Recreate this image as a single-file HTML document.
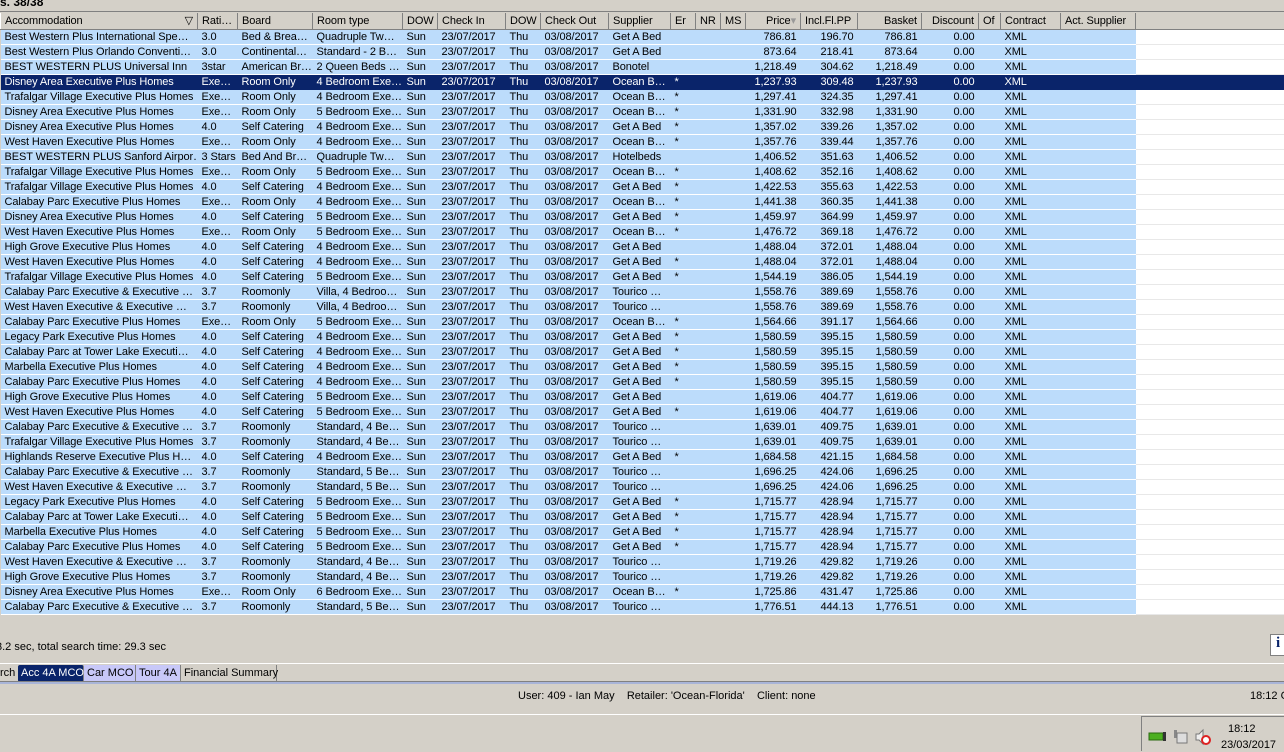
<!DOCTYPE html>
<html><head><meta charset="utf-8"><style>
*{margin:0;padding:0;box-sizing:border-box}
body{width:1284px;height:751px;overflow:hidden;background:#d4d0c8;font-family:"Liberation Sans",Tahoma,sans-serif;font-size:11px;color:#000;position:relative;white-space:nowrap}
#top{position:absolute;left:0;top:0;width:1284px;height:12px;border-bottom:1px solid #808080}
#top b{position:absolute;left:0;top:-5px;font-size:12px}
table{position:absolute;left:0;top:13px;border-collapse:collapse;table-layout:fixed;width:1284px;letter-spacing:-0.1px}
td,th{height:15px;line-height:14px;padding:0 4px;white-space:nowrap;overflow:hidden;font-weight:normal;text-align:left}
th{background:#d4d0c8;border-right:1px solid #808080;border-left:1px solid #fff;border-bottom:1px solid #808080;height:16px}
td{background:#bcdcfb;border-bottom:1px solid #fff}
td.w{background:#fff;border-bottom:1px solid #e8e8e8}
td.r{text-align:right}
tr.s td{background:#0a246a;color:#fff;border-bottom:1px solid #0a246a}
#msg{position:absolute;left:-4px;top:641px}
#tabs{position:absolute;left:0;top:663px;height:18px;width:1284px;border-top:1px solid #fff}
#tabs span{position:absolute;top:1px;height:17px;line-height:16px;padding:0 3px;border-right:1px solid #808080;white-space:nowrap}
#line1{position:absolute;left:0;top:681px;width:1284px;height:3px;background:#a8b4d8;border-top:1px solid #808080}
#status{position:absolute;top:690px;left:518px}
#clk{position:absolute;top:690px;left:1250px}
#line2{position:absolute;left:0;top:714px;width:1284px;height:1px;background:#fff}
#tray{position:absolute;left:1141px;top:716px;width:143px;height:35px;border-left:1px solid #808080;border-top:1px solid #808080}
#ib{position:absolute;left:1270px;top:634px;width:16px;height:22px;background:#fff;border:1px solid #808080;font:bold 15px "Liberation Serif",serif;color:#0a246a;padding-left:5px}
</style></head><body>
<div id="top"><b>s. 38/38</b></div>
<table>
<colgroup><col style="width:197px"><col style="width:40px"><col style="width:75px"><col style="width:90px"><col style="width:35px"><col style="width:68px"><col style="width:35px"><col style="width:68px"><col style="width:62px"><col style="width:25px"><col style="width:25px"><col style="width:25px"><col style="width:55px"><col style="width:57px"><col style="width:64px"><col style="width:57px"><col style="width:22px"><col style="width:60px"><col style="width:75px"><col style="width:149px"></colgroup>
<tr><th>Accommodation<span style="float:right">&#9661;</span></th><th>Rati…</th><th>Board</th><th>Room type</th><th>DOW</th><th>Check In</th><th>DOW</th><th>Check Out</th><th>Supplier</th><th>Er</th><th>NR</th><th>MS</th><th style="text-align:right">Price<span style="color:#999">&#9662;</span></th><th>Incl.Fl.PP</th><th style="text-align:right">Basket</th><th style="text-align:right">Discount</th><th>Of</th><th>Contract</th><th>Act. Supplier</th><th></th></tr>
<tr><td>Best Western Plus International Spe…</td><td>3.0</td><td>Bed &amp; Brea…</td><td>Quadruple Tw…</td><td>Sun</td><td>23/07/2017</td><td>Thu</td><td>03/08/2017</td><td>Get A Bed</td><td></td><td></td><td></td><td class="r">786.81</td><td class="r">196.70</td><td class="r">786.81</td><td class="r">0.00</td><td></td><td>XML</td><td></td><td class="w"></td></tr>
<tr><td>Best Western Plus Orlando Conventi…</td><td>3.0</td><td>Continental…</td><td>Standard - 2 B…</td><td>Sun</td><td>23/07/2017</td><td>Thu</td><td>03/08/2017</td><td>Get A Bed</td><td></td><td></td><td></td><td class="r">873.64</td><td class="r">218.41</td><td class="r">873.64</td><td class="r">0.00</td><td></td><td>XML</td><td></td><td class="w"></td></tr>
<tr><td>BEST WESTERN PLUS Universal Inn</td><td>3star</td><td>American Br…</td><td>2 Queen Beds …</td><td>Sun</td><td>23/07/2017</td><td>Thu</td><td>03/08/2017</td><td>Bonotel</td><td></td><td></td><td></td><td class="r">1,218.49</td><td class="r">304.62</td><td class="r">1,218.49</td><td class="r">0.00</td><td></td><td>XML</td><td></td><td class="w"></td></tr>
<tr class="s"><td>Disney Area Executive Plus Homes</td><td>Exe…</td><td>Room Only</td><td>4 Bedroom Exe…</td><td>Sun</td><td>23/07/2017</td><td>Thu</td><td>03/08/2017</td><td>Ocean B…</td><td>*</td><td></td><td></td><td class="r">1,237.93</td><td class="r">309.48</td><td class="r">1,237.93</td><td class="r">0.00</td><td></td><td>XML</td><td></td><td class="w"></td></tr>
<tr><td>Trafalgar Village Executive Plus Homes</td><td>Exe…</td><td>Room Only</td><td>4 Bedroom Exe…</td><td>Sun</td><td>23/07/2017</td><td>Thu</td><td>03/08/2017</td><td>Ocean B…</td><td>*</td><td></td><td></td><td class="r">1,297.41</td><td class="r">324.35</td><td class="r">1,297.41</td><td class="r">0.00</td><td></td><td>XML</td><td></td><td class="w"></td></tr>
<tr><td>Disney Area Executive Plus Homes</td><td>Exe…</td><td>Room Only</td><td>5 Bedroom Exe…</td><td>Sun</td><td>23/07/2017</td><td>Thu</td><td>03/08/2017</td><td>Ocean B…</td><td>*</td><td></td><td></td><td class="r">1,331.90</td><td class="r">332.98</td><td class="r">1,331.90</td><td class="r">0.00</td><td></td><td>XML</td><td></td><td class="w"></td></tr>
<tr><td>Disney Area Executive Plus Homes</td><td>4.0</td><td>Self Catering</td><td>4 Bedroom Exe…</td><td>Sun</td><td>23/07/2017</td><td>Thu</td><td>03/08/2017</td><td>Get A Bed</td><td>*</td><td></td><td></td><td class="r">1,357.02</td><td class="r">339.26</td><td class="r">1,357.02</td><td class="r">0.00</td><td></td><td>XML</td><td></td><td class="w"></td></tr>
<tr><td>West Haven Executive Plus Homes</td><td>Exe…</td><td>Room Only</td><td>4 Bedroom Exe…</td><td>Sun</td><td>23/07/2017</td><td>Thu</td><td>03/08/2017</td><td>Ocean B…</td><td>*</td><td></td><td></td><td class="r">1,357.76</td><td class="r">339.44</td><td class="r">1,357.76</td><td class="r">0.00</td><td></td><td>XML</td><td></td><td class="w"></td></tr>
<tr><td>BEST WESTERN PLUS Sanford Airpor…</td><td>3 Stars</td><td>Bed And Br…</td><td>Quadruple Tw…</td><td>Sun</td><td>23/07/2017</td><td>Thu</td><td>03/08/2017</td><td>Hotelbeds</td><td></td><td></td><td></td><td class="r">1,406.52</td><td class="r">351.63</td><td class="r">1,406.52</td><td class="r">0.00</td><td></td><td>XML</td><td></td><td class="w"></td></tr>
<tr><td>Trafalgar Village Executive Plus Homes</td><td>Exe…</td><td>Room Only</td><td>5 Bedroom Exe…</td><td>Sun</td><td>23/07/2017</td><td>Thu</td><td>03/08/2017</td><td>Ocean B…</td><td>*</td><td></td><td></td><td class="r">1,408.62</td><td class="r">352.16</td><td class="r">1,408.62</td><td class="r">0.00</td><td></td><td>XML</td><td></td><td class="w"></td></tr>
<tr><td>Trafalgar Village Executive Plus Homes</td><td>4.0</td><td>Self Catering</td><td>4 Bedroom Exe…</td><td>Sun</td><td>23/07/2017</td><td>Thu</td><td>03/08/2017</td><td>Get A Bed</td><td>*</td><td></td><td></td><td class="r">1,422.53</td><td class="r">355.63</td><td class="r">1,422.53</td><td class="r">0.00</td><td></td><td>XML</td><td></td><td class="w"></td></tr>
<tr><td>Calabay Parc Executive Plus Homes</td><td>Exe…</td><td>Room Only</td><td>4 Bedroom Exe…</td><td>Sun</td><td>23/07/2017</td><td>Thu</td><td>03/08/2017</td><td>Ocean B…</td><td>*</td><td></td><td></td><td class="r">1,441.38</td><td class="r">360.35</td><td class="r">1,441.38</td><td class="r">0.00</td><td></td><td>XML</td><td></td><td class="w"></td></tr>
<tr><td>Disney Area Executive Plus Homes</td><td>4.0</td><td>Self Catering</td><td>5 Bedroom Exe…</td><td>Sun</td><td>23/07/2017</td><td>Thu</td><td>03/08/2017</td><td>Get A Bed</td><td>*</td><td></td><td></td><td class="r">1,459.97</td><td class="r">364.99</td><td class="r">1,459.97</td><td class="r">0.00</td><td></td><td>XML</td><td></td><td class="w"></td></tr>
<tr><td>West Haven Executive Plus Homes</td><td>Exe…</td><td>Room Only</td><td>5 Bedroom Exe…</td><td>Sun</td><td>23/07/2017</td><td>Thu</td><td>03/08/2017</td><td>Ocean B…</td><td>*</td><td></td><td></td><td class="r">1,476.72</td><td class="r">369.18</td><td class="r">1,476.72</td><td class="r">0.00</td><td></td><td>XML</td><td></td><td class="w"></td></tr>
<tr><td>High Grove Executive Plus Homes</td><td>4.0</td><td>Self Catering</td><td>4 Bedroom Exe…</td><td>Sun</td><td>23/07/2017</td><td>Thu</td><td>03/08/2017</td><td>Get A Bed</td><td></td><td></td><td></td><td class="r">1,488.04</td><td class="r">372.01</td><td class="r">1,488.04</td><td class="r">0.00</td><td></td><td>XML</td><td></td><td class="w"></td></tr>
<tr><td>West Haven Executive Plus Homes</td><td>4.0</td><td>Self Catering</td><td>4 Bedroom Exe…</td><td>Sun</td><td>23/07/2017</td><td>Thu</td><td>03/08/2017</td><td>Get A Bed</td><td>*</td><td></td><td></td><td class="r">1,488.04</td><td class="r">372.01</td><td class="r">1,488.04</td><td class="r">0.00</td><td></td><td>XML</td><td></td><td class="w"></td></tr>
<tr><td>Trafalgar Village Executive Plus Homes</td><td>4.0</td><td>Self Catering</td><td>5 Bedroom Exe…</td><td>Sun</td><td>23/07/2017</td><td>Thu</td><td>03/08/2017</td><td>Get A Bed</td><td>*</td><td></td><td></td><td class="r">1,544.19</td><td class="r">386.05</td><td class="r">1,544.19</td><td class="r">0.00</td><td></td><td>XML</td><td></td><td class="w"></td></tr>
<tr><td>Calabay Parc Executive &amp; Executive …</td><td>3.7</td><td>Roomonly</td><td>Villa, 4 Bedroo…</td><td>Sun</td><td>23/07/2017</td><td>Thu</td><td>03/08/2017</td><td>Tourico …</td><td></td><td></td><td></td><td class="r">1,558.76</td><td class="r">389.69</td><td class="r">1,558.76</td><td class="r">0.00</td><td></td><td>XML</td><td></td><td class="w"></td></tr>
<tr><td>West Haven Executive &amp; Executive …</td><td>3.7</td><td>Roomonly</td><td>Villa, 4 Bedroo…</td><td>Sun</td><td>23/07/2017</td><td>Thu</td><td>03/08/2017</td><td>Tourico …</td><td></td><td></td><td></td><td class="r">1,558.76</td><td class="r">389.69</td><td class="r">1,558.76</td><td class="r">0.00</td><td></td><td>XML</td><td></td><td class="w"></td></tr>
<tr><td>Calabay Parc Executive Plus Homes</td><td>Exe…</td><td>Room Only</td><td>5 Bedroom Exe…</td><td>Sun</td><td>23/07/2017</td><td>Thu</td><td>03/08/2017</td><td>Ocean B…</td><td>*</td><td></td><td></td><td class="r">1,564.66</td><td class="r">391.17</td><td class="r">1,564.66</td><td class="r">0.00</td><td></td><td>XML</td><td></td><td class="w"></td></tr>
<tr><td>Legacy Park Executive Plus Homes</td><td>4.0</td><td>Self Catering</td><td>4 Bedroom Exe…</td><td>Sun</td><td>23/07/2017</td><td>Thu</td><td>03/08/2017</td><td>Get A Bed</td><td>*</td><td></td><td></td><td class="r">1,580.59</td><td class="r">395.15</td><td class="r">1,580.59</td><td class="r">0.00</td><td></td><td>XML</td><td></td><td class="w"></td></tr>
<tr><td>Calabay Parc at Tower Lake Executi…</td><td>4.0</td><td>Self Catering</td><td>4 Bedroom Exe…</td><td>Sun</td><td>23/07/2017</td><td>Thu</td><td>03/08/2017</td><td>Get A Bed</td><td>*</td><td></td><td></td><td class="r">1,580.59</td><td class="r">395.15</td><td class="r">1,580.59</td><td class="r">0.00</td><td></td><td>XML</td><td></td><td class="w"></td></tr>
<tr><td>Marbella Executive Plus Homes</td><td>4.0</td><td>Self Catering</td><td>4 Bedroom Exe…</td><td>Sun</td><td>23/07/2017</td><td>Thu</td><td>03/08/2017</td><td>Get A Bed</td><td>*</td><td></td><td></td><td class="r">1,580.59</td><td class="r">395.15</td><td class="r">1,580.59</td><td class="r">0.00</td><td></td><td>XML</td><td></td><td class="w"></td></tr>
<tr><td>Calabay Parc Executive Plus Homes</td><td>4.0</td><td>Self Catering</td><td>4 Bedroom Exe…</td><td>Sun</td><td>23/07/2017</td><td>Thu</td><td>03/08/2017</td><td>Get A Bed</td><td>*</td><td></td><td></td><td class="r">1,580.59</td><td class="r">395.15</td><td class="r">1,580.59</td><td class="r">0.00</td><td></td><td>XML</td><td></td><td class="w"></td></tr>
<tr><td>High Grove Executive Plus Homes</td><td>4.0</td><td>Self Catering</td><td>5 Bedroom Exe…</td><td>Sun</td><td>23/07/2017</td><td>Thu</td><td>03/08/2017</td><td>Get A Bed</td><td></td><td></td><td></td><td class="r">1,619.06</td><td class="r">404.77</td><td class="r">1,619.06</td><td class="r">0.00</td><td></td><td>XML</td><td></td><td class="w"></td></tr>
<tr><td>West Haven Executive Plus Homes</td><td>4.0</td><td>Self Catering</td><td>5 Bedroom Exe…</td><td>Sun</td><td>23/07/2017</td><td>Thu</td><td>03/08/2017</td><td>Get A Bed</td><td>*</td><td></td><td></td><td class="r">1,619.06</td><td class="r">404.77</td><td class="r">1,619.06</td><td class="r">0.00</td><td></td><td>XML</td><td></td><td class="w"></td></tr>
<tr><td>Calabay Parc Executive &amp; Executive …</td><td>3.7</td><td>Roomonly</td><td>Standard, 4 Be…</td><td>Sun</td><td>23/07/2017</td><td>Thu</td><td>03/08/2017</td><td>Tourico …</td><td></td><td></td><td></td><td class="r">1,639.01</td><td class="r">409.75</td><td class="r">1,639.01</td><td class="r">0.00</td><td></td><td>XML</td><td></td><td class="w"></td></tr>
<tr><td>Trafalgar Village Executive Plus Homes</td><td>3.7</td><td>Roomonly</td><td>Standard, 4 Be…</td><td>Sun</td><td>23/07/2017</td><td>Thu</td><td>03/08/2017</td><td>Tourico …</td><td></td><td></td><td></td><td class="r">1,639.01</td><td class="r">409.75</td><td class="r">1,639.01</td><td class="r">0.00</td><td></td><td>XML</td><td></td><td class="w"></td></tr>
<tr><td>Highlands Reserve Executive Plus H…</td><td>4.0</td><td>Self Catering</td><td>4 Bedroom Exe…</td><td>Sun</td><td>23/07/2017</td><td>Thu</td><td>03/08/2017</td><td>Get A Bed</td><td>*</td><td></td><td></td><td class="r">1,684.58</td><td class="r">421.15</td><td class="r">1,684.58</td><td class="r">0.00</td><td></td><td>XML</td><td></td><td class="w"></td></tr>
<tr><td>Calabay Parc Executive &amp; Executive …</td><td>3.7</td><td>Roomonly</td><td>Standard, 5 Be…</td><td>Sun</td><td>23/07/2017</td><td>Thu</td><td>03/08/2017</td><td>Tourico …</td><td></td><td></td><td></td><td class="r">1,696.25</td><td class="r">424.06</td><td class="r">1,696.25</td><td class="r">0.00</td><td></td><td>XML</td><td></td><td class="w"></td></tr>
<tr><td>West Haven Executive &amp; Executive …</td><td>3.7</td><td>Roomonly</td><td>Standard, 5 Be…</td><td>Sun</td><td>23/07/2017</td><td>Thu</td><td>03/08/2017</td><td>Tourico …</td><td></td><td></td><td></td><td class="r">1,696.25</td><td class="r">424.06</td><td class="r">1,696.25</td><td class="r">0.00</td><td></td><td>XML</td><td></td><td class="w"></td></tr>
<tr><td>Legacy Park Executive Plus Homes</td><td>4.0</td><td>Self Catering</td><td>5 Bedroom Exe…</td><td>Sun</td><td>23/07/2017</td><td>Thu</td><td>03/08/2017</td><td>Get A Bed</td><td>*</td><td></td><td></td><td class="r">1,715.77</td><td class="r">428.94</td><td class="r">1,715.77</td><td class="r">0.00</td><td></td><td>XML</td><td></td><td class="w"></td></tr>
<tr><td>Calabay Parc at Tower Lake Executi…</td><td>4.0</td><td>Self Catering</td><td>5 Bedroom Exe…</td><td>Sun</td><td>23/07/2017</td><td>Thu</td><td>03/08/2017</td><td>Get A Bed</td><td>*</td><td></td><td></td><td class="r">1,715.77</td><td class="r">428.94</td><td class="r">1,715.77</td><td class="r">0.00</td><td></td><td>XML</td><td></td><td class="w"></td></tr>
<tr><td>Marbella Executive Plus Homes</td><td>4.0</td><td>Self Catering</td><td>5 Bedroom Exe…</td><td>Sun</td><td>23/07/2017</td><td>Thu</td><td>03/08/2017</td><td>Get A Bed</td><td>*</td><td></td><td></td><td class="r">1,715.77</td><td class="r">428.94</td><td class="r">1,715.77</td><td class="r">0.00</td><td></td><td>XML</td><td></td><td class="w"></td></tr>
<tr><td>Calabay Parc Executive Plus Homes</td><td>4.0</td><td>Self Catering</td><td>5 Bedroom Exe…</td><td>Sun</td><td>23/07/2017</td><td>Thu</td><td>03/08/2017</td><td>Get A Bed</td><td>*</td><td></td><td></td><td class="r">1,715.77</td><td class="r">428.94</td><td class="r">1,715.77</td><td class="r">0.00</td><td></td><td>XML</td><td></td><td class="w"></td></tr>
<tr><td>West Haven Executive &amp; Executive …</td><td>3.7</td><td>Roomonly</td><td>Standard, 4 Be…</td><td>Sun</td><td>23/07/2017</td><td>Thu</td><td>03/08/2017</td><td>Tourico …</td><td></td><td></td><td></td><td class="r">1,719.26</td><td class="r">429.82</td><td class="r">1,719.26</td><td class="r">0.00</td><td></td><td>XML</td><td></td><td class="w"></td></tr>
<tr><td>High Grove Executive Plus Homes</td><td>3.7</td><td>Roomonly</td><td>Standard, 4 Be…</td><td>Sun</td><td>23/07/2017</td><td>Thu</td><td>03/08/2017</td><td>Tourico …</td><td></td><td></td><td></td><td class="r">1,719.26</td><td class="r">429.82</td><td class="r">1,719.26</td><td class="r">0.00</td><td></td><td>XML</td><td></td><td class="w"></td></tr>
<tr><td>Disney Area Executive Plus Homes</td><td>Exe…</td><td>Room Only</td><td>6 Bedroom Exe…</td><td>Sun</td><td>23/07/2017</td><td>Thu</td><td>03/08/2017</td><td>Ocean B…</td><td>*</td><td></td><td></td><td class="r">1,725.86</td><td class="r">431.47</td><td class="r">1,725.86</td><td class="r">0.00</td><td></td><td>XML</td><td></td><td class="w"></td></tr>
<tr><td>Calabay Parc Executive &amp; Executive …</td><td>3.7</td><td>Roomonly</td><td>Standard, 5 Be…</td><td>Sun</td><td>23/07/2017</td><td>Thu</td><td>03/08/2017</td><td>Tourico …</td><td></td><td></td><td></td><td class="r">1,776.51</td><td class="r">444.13</td><td class="r">1,776.51</td><td class="r">0.00</td><td></td><td>XML</td><td></td><td class="w"></td></tr>
</table>
<div id="msg">3.2 sec, total search time: 29.3 sec</div>
<div id="ib">i</div>
<div id="tabs">
<span style="left:-3px;border-right:none">rch</span>
<span style="left:18px;width:66px;background:#0a246a;color:#fff;border-radius:2px">Acc 4A MCO</span>
<span style="left:84px;width:52px;background:#c8c8f8">Car MCO</span>
<span style="left:136px;width:45px;background:#c8c8f8">Tour 4A</span>
<span style="left:181px;width:96px">Financial Summary</span>
</div>
<div id="line1"></div>
<div id="status">User: 409 - Ian May&nbsp;&nbsp;&nbsp; Retailer: 'Ocean-Florida'&nbsp;&nbsp;&nbsp; Client: none</div>
<div id="clk">18:12 G</div>
<div id="line2"></div>
<div id="tray">
<svg width="143" height="35" style="position:absolute;left:0;top:0">
<rect x="7" y="16" width="14" height="7" fill="#4caf20" stroke="#2a6a10"/><rect x="21" y="15" width="3" height="9" fill="#333"/>
<rect x="32" y="13" width="3" height="8" fill="#888"/><rect x="35" y="16" width="10" height="10" fill="#ddd" stroke="#777"/>
<path d="M54 17h3l4-4v14l-4-4h-3z" fill="#eee" stroke="#777"/><circle cx="64" cy="23" r="4" fill="#fff" stroke="#d22" stroke-width="2"/>
</svg>
<div style="position:absolute;left:86px;top:6px">18:12</div>
<div style="position:absolute;left:79px;top:22px">23/03/2017</div>
</div>
</body></html>
